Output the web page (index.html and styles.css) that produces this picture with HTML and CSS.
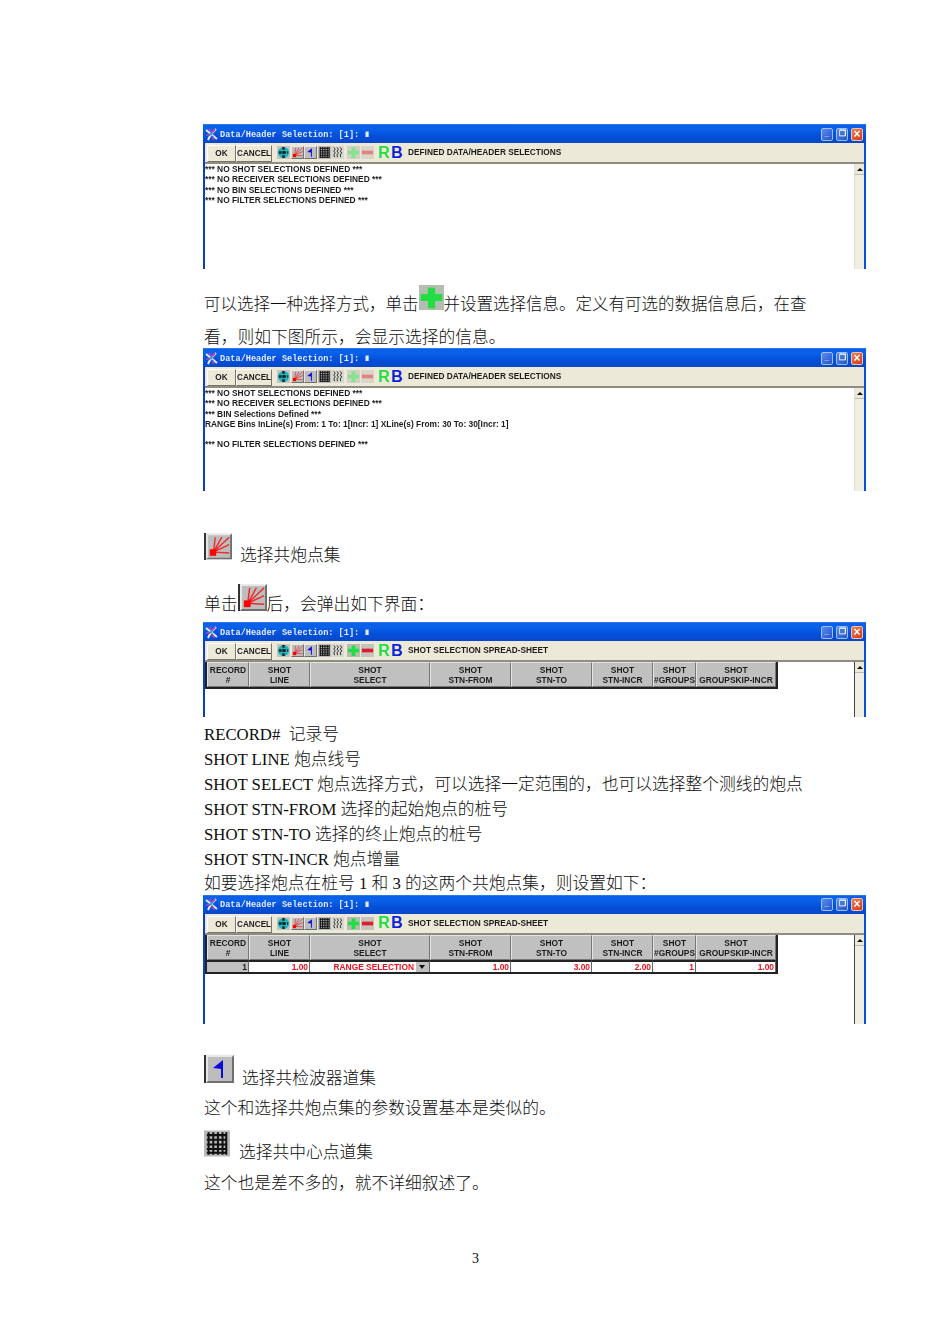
FILE: index.html
```html
<!DOCTYPE html>
<html lang="zh">
<head>
<meta charset="utf-8">
<title>Data/Header Selection</title>
<link rel="stylesheet" href="styles.css">
</head>
<body>
<svg class="defs" aria-hidden="true">
  <symbol id="bevel" viewBox="0 0 28 28"><rect width="28" height="28" fill="#bdbdbd"/><path d="M0 28V0h28l-2 2H2v24z" fill="#e8e8e8"/><path d="M28 0v28H0l2-2h24V2z" fill="#6f6f6f"/></symbol>
  <symbol id="i-app" viewBox="0 0 13 13"><path d="M1 2l5 4-3 6M11 1L6 6l6 5" stroke="#e8e8ff" stroke-width="2" fill="none"/><path d="M4 1l3 3 3-3M1 7l4 0M7 8l2 4" stroke="#8a4ac8" stroke-width="2" fill="none"/><circle cx="6" cy="6" r="1.5" fill="#30a0d0"/></symbol>
  <symbol id="i-globe" viewBox="0 0 28 28"><rect width="28" height="28" fill="#c4c4bc"/><circle cx="14" cy="14" r="12" fill="#22b5b5"/><path d="M14 2v24M4 14h20" stroke="#123" stroke-width="5" stroke-dasharray="6 3"/></symbol>
  <symbol id="i-shot" viewBox="0 0 28 28"><use href="#bevel"/><path d="M8 20L10 4M8 20L17 4M8 20L25 4M8 20L25 12M8 20L25 21" stroke="#ee2a2a" stroke-width="1.5" fill="none"/><rect x="4" y="17" width="7" height="7" fill="#f00"/></symbol>
  <symbol id="i-flag" viewBox="0 0 28 28"><use href="#bevel"/><path d="M17 5v18h-2v-9l-8-1z" fill="#0a0ae0"/></symbol>
  <symbol id="i-grid" viewBox="0 0 28 28"><rect width="28" height="28" fill="#b9b9b9"/><path d="M3 5h22M3 10h22M3 15h22M3 20h22M3 24h22M5 2v24M10 2v24M15 2v24M20 2v24M24 2v24" stroke="#111" stroke-width="2.2"/></symbol>
  <symbol id="i-gather" viewBox="0 0 28 28"><rect width="28" height="28" fill="#d8d8d0"/><path d="M6 3l3 4-3 4 3 4-3 4 2 5M13 3l3 4-3 4 3 4-3 4 1 5M20 3l3 4-3 4 3 4-3 4 1 5" stroke="#222" stroke-width="2" fill="none"/></symbol>
  <symbol id="i-plus" viewBox="0 0 28 28"><rect width="28" height="28" fill="#b5bcb0"/><path d="M10 3h8v7h8v8h-8v8h-8v-8H2v-8h8z" fill="#22dd44"/></symbol>
  <symbol id="i-minus" viewBox="0 0 28 28"><rect width="28" height="28" fill="#c4c4bc"/><rect x="2" y="10" width="24" height="8" fill="#e01c2c"/></symbol>
</svg>

<main class="page">

  <section class="win win-tall">
    <header class="title"><svg class="app"><use href="#i-app"/></svg><span class="title-text">Data/Header Selection: [1]: ∎</span><span class="ctrls"><i class="ctrl">_</i><i class="ctrl">❐</i><i class="ctrl close">×</i></span></header>
    <div class="tools dim">
      <button class="btn ok">OK</button><button class="btn cancel">CANCEL</button>
      <span class="icons"><svg class="ti"><use href="#i-globe"/></svg><svg class="ti"><use href="#i-shot"/></svg><svg class="ti"><use href="#i-flag"/></svg><svg class="ti"><use href="#i-grid"/></svg><svg class="ti"><use href="#i-gather"/></svg></span>
      <span class="icons pm"><svg class="ti plus"><use href="#i-plus"/></svg><svg class="ti minus"><use href="#i-minus"/></svg></span>
      <span class="rb"><b class="r">R</b><b class="b">B</b></span>
      <span class="tool-label">DEFINED DATA/HEADER SELECTIONS</span>
    </div>
    <div class="body">
      <div class="log">
        <p>*** NO SHOT SELECTIONS DEFINED ***</p>
        <p>*** NO RECEIVER SELECTIONS DEFINED ***</p>
        <p>*** NO BIN SELECTIONS DEFINED ***</p>
        <p>*** NO FILTER SELECTIONS DEFINED ***</p>
      </div>
      <div class="scroll"><span class="arrow"></span></div>
    </div>
  </section>

  <p class="line l1"><span>可以选择一种选择方式，单击</span><svg class="inline-plus"><use href="#i-plus"/></svg><span>并设置选择信息。定义有可选的数据信息后，在查</span></p>
  <p class="line l2">看，则如下图所示，会显示选择的信息。</p>

  <section class="win win-mid">
    <header class="title"><svg class="app"><use href="#i-app"/></svg><span class="title-text">Data/Header Selection: [1]: ∎</span><span class="ctrls"><i class="ctrl">_</i><i class="ctrl">❐</i><i class="ctrl close">×</i></span></header>
    <div class="tools dim">
      <button class="btn ok">OK</button><button class="btn cancel">CANCEL</button>
      <span class="icons"><svg class="ti"><use href="#i-globe"/></svg><svg class="ti"><use href="#i-shot"/></svg><svg class="ti"><use href="#i-flag"/></svg><svg class="ti"><use href="#i-grid"/></svg><svg class="ti"><use href="#i-gather"/></svg></span>
      <span class="icons pm"><svg class="ti plus"><use href="#i-plus"/></svg><svg class="ti minus"><use href="#i-minus"/></svg></span>
      <span class="rb"><b class="r">R</b><b class="b">B</b></span>
      <span class="tool-label">DEFINED DATA/HEADER SELECTIONS</span>
    </div>
    <div class="body">
      <div class="log">
        <p>*** NO SHOT SELECTIONS DEFINED ***</p>
        <p>*** NO RECEIVER SELECTIONS DEFINED ***</p>
        <p>*** BIN Selections Defined ***</p>
        <p>RANGE Bins InLine(s) From: 1 To: 1[Incr: 1] XLine(s) From: 30 To: 30[Incr: 1]</p>
        <p>&nbsp;</p>
        <p>*** NO FILTER SELECTIONS DEFINED ***</p>
      </div>
      <div class="scroll"><span class="arrow"></span></div>
    </div>
  </section>

  <p class="line l3"><svg class="big shot1"><use href="#i-shot"/></svg><span class="after-shot">选择共炮点集</span></p>
  <p class="line l4"><span>单击</span><svg class="big shot2"><use href="#i-shot"/></svg><span>后，会弹出如下界面：</span></p>

  <section class="win win-short">
    <header class="title"><svg class="app"><use href="#i-app"/></svg><span class="title-text">Data/Header Selection: [1]: ∎</span><span class="ctrls"><i class="ctrl">_</i><i class="ctrl">❐</i><i class="ctrl close">×</i></span></header>
    <div class="tools">
      <button class="btn ok">OK</button><button class="btn cancel">CANCEL</button>
      <span class="icons"><svg class="ti"><use href="#i-globe"/></svg><svg class="ti"><use href="#i-shot"/></svg><svg class="ti"><use href="#i-flag"/></svg><svg class="ti"><use href="#i-grid"/></svg><svg class="ti"><use href="#i-gather"/></svg></span>
      <span class="icons pm"><svg class="ti plus"><use href="#i-plus"/></svg><svg class="ti minus"><use href="#i-minus"/></svg></span>
      <span class="rb"><b class="r">R</b><b class="b">B</b></span>
      <span class="tool-label">SHOT SELECTION SPREAD-SHEET</span>
    </div>
    <div class="body">
      <div class="sheet">
        <div class="th">RECORD<br>#</div><div class="th">SHOT<br>LINE</div><div class="th">SHOT<br>SELECT</div><div class="th">SHOT<br>STN-FROM</div><div class="th">SHOT<br>STN-TO</div><div class="th">SHOT<br>STN-INCR</div><div class="th">SHOT<br>#GROUPS</div><div class="th">SHOT<br>GROUPSKIP-INCR</div>
      </div>
      <div class="scroll sheet-scroll"><span class="arrow"></span></div>
    </div>
  </section>

  <div class="notes">
    <p class="line note">RECORD#&nbsp; 记录号</p>
    <p class="line note">SHOT LINE 炮点线号</p>
    <p class="line note">SHOT SELECT 炮点选择方式，可以选择一定范围的，也可以选择整个测线的炮点</p>
    <p class="line note">SHOT STN-FROM 选择的起始炮点的桩号</p>
    <p class="line note">SHOT STN-TO 选择的终止炮点的桩号</p>
    <p class="line note">SHOT STN-INCR 炮点增量</p>
    <p class="line note">如要选择炮点在桩号 1 和 3 的这两个共炮点集，则设置如下：</p>
  </div>

  <section class="win win-table">
    <header class="title"><svg class="app"><use href="#i-app"/></svg><span class="title-text">Data/Header Selection: [1]: ∎</span><span class="ctrls"><i class="ctrl">_</i><i class="ctrl">❐</i><i class="ctrl close">×</i></span></header>
    <div class="tools">
      <button class="btn ok">OK</button><button class="btn cancel">CANCEL</button>
      <span class="icons"><svg class="ti"><use href="#i-globe"/></svg><svg class="ti"><use href="#i-shot"/></svg><svg class="ti"><use href="#i-flag"/></svg><svg class="ti"><use href="#i-grid"/></svg><svg class="ti"><use href="#i-gather"/></svg></span>
      <span class="icons pm"><svg class="ti plus"><use href="#i-plus"/></svg><svg class="ti minus"><use href="#i-minus"/></svg></span>
      <span class="rb"><b class="r">R</b><b class="b">B</b></span>
      <span class="tool-label">SHOT SELECTION SPREAD-SHEET</span>
    </div>
    <div class="body">
      <div class="sheet">
        <div class="th">RECORD<br>#</div><div class="th">SHOT<br>LINE</div><div class="th">SHOT<br>SELECT</div><div class="th">SHOT<br>STN-FROM</div><div class="th">SHOT<br>STN-TO</div><div class="th">SHOT<br>STN-INCR</div><div class="th">SHOT<br>#GROUPS</div><div class="th">SHOT<br>GROUPSKIP-INCR</div>
        <div class="td rec">1</div><div class="td">1.00</div><div class="td sel"><span>RANGE SELECTION</span><span class="drop"></span></div><div class="td">1.00</div><div class="td">3.00</div><div class="td">2.00</div><div class="td">1</div><div class="td">1.00</div>
      </div>
      <div class="scroll sheet-scroll"><span class="arrow"></span></div>
    </div>
  </section>

  <p class="line l5"><svg class="big flag"><use href="#i-flag"/></svg><span class="after-flag">选择共检波器道集</span></p>
  <p class="line l6">这个和选择共炮点集的参数设置基本是类似的。</p>
  <p class="line l7"><svg class="big gridicon"><use href="#i-grid"/></svg><span class="after-grid">选择共中心点道集</span></p>
  <p class="line l8">这个也是差不多的，就不详细叙述了。</p>
  <p class="line pageno">3</p>
</main>
</body>
</html>
```

FILE: styles.css
```css
* { box-sizing: border-box; }
html, body { margin: 0; padding: 0; background: #fff; }
body { width: 950px; height: 1344px; overflow: hidden; }
.defs { position: absolute; width: 0; height: 0; }

.page {
  padding: 124px 84px 0 203px;
  font-family: "Liberation Serif", "Noto Sans CJK SC", serif;
  font-size: 16.75px;
  font-weight: 300;
  color: #0c0c0c;
}

/* text lines */
.line {
  margin: 0;
  height: 24px;
  padding: 3px 0 0 1px;
  display: flex;
  align-items: center;
  white-space: pre;
  line-height: 21px;
}
.l1 { margin-top: 22px; font-size: 16.5px; }
.l2 { margin-top: 9px; }
.l3 { margin-top: 51px; }
.l4 { margin-top: 25px; }
.l5 { margin-top: 41px; }
.l6 { margin-top: 6px; }
.l7 { margin-top: 20px; }
.l8 { margin-top: 7px; }
.win-short { margin-top: 7px; }
.notes { padding-top: 4px; }
.note { height: 24.85px; }
.pageno {
  margin-top: 51px;
  justify-content: center;
  font-size: 14px;
  padding: 3px 0 0;
  margin-left: -118px;
}

/* inline picture icons */
.big, .inline-plus { flex: none; display: block; }
.inline-plus { width: 25px; height: 25px; margin-bottom: 15px; }
.big { border-left: 2px solid #333; }
.shot1 { width: 28px; height: 27px; margin-bottom: 18px; }
.shot2 { width: 29px; height: 27px; margin-bottom: 14px; }
.flag { width: 30px; height: 28px; margin-bottom: 19px; }
.gridicon { width: 26px; height: 27px; margin-bottom: 18px; border-left: 0; }
.after-shot { margin-left: 8px; }
.after-flag { margin-left: 8px; }
.after-grid { margin-left: 9px; }

/* window */
.win {
  width: 663px;
  display: flex;
  flex-direction: column;
  border-left: 2px solid #0a3fc0;
  border-right: 2px solid #0a4fd8;
  filter: blur(0.35px);
  font-family: "Liberation Sans", Arial, sans-serif;
  font-weight: bold;
  color: #1c1c1c;
}
.win-tall { height: 145px; }
.win-mid { height: 143px; }
.win-short { height: 95px; }
.win-table { height: 129px; }

.title {
  height: 19px;
  flex: none;
  margin: 0 -2px;
  padding: 0 3px 0 2px;
  display: flex;
  align-items: center;
  background: linear-gradient(#0a5fe6 0, #0a62ea 20%, #0550da 60%, #0748c8 100%);
  border-top: 1px solid #2a78ee;
}
.app { width: 13px; height: 13px; flex: none; }
.title-text {
  margin-left: 2px;
  font-family: "Liberation Mono", monospace;
  font-size: 8.6px;
  color: #e6ecff;
  white-space: pre;
}
.ctrls { margin-left: auto; display: flex; gap: 3px; }
.ctrl {
  width: 12px;
  height: 13px;
  border: 1px solid #9fc0f8;
  border-radius: 2px;
  background: linear-gradient(135deg, #5a8cec, #2454cc);
  color: #fff;
  font-style: normal;
  font-size: 8px;
  line-height: 10px;
  text-align: center;
  overflow: hidden;
}
.close { background: linear-gradient(135deg, #ec8058, #d43a14); border-color: #f0c0a8; font-size: 12px; }

/* toolbar */
.tools {
  height: 21px;
  flex: none;
  display: flex;
  align-items: center;
  background: #ece9d8;
  border-bottom: 2px solid #8f8d80;
  padding-left: 2px;
}
.btn {
  height: 17px;
  margin: 2px 0 0;
  padding: 0;
  border: 1px solid;
  border-color: #fff #77756a #77756a #fff;
  background: #ece9d8;
  font: bold 8.2px "Liberation Sans", Arial, sans-serif;
  color: #1c1c1c;
}
.ok { width: 29px; }
.cancel { width: 36px; }
.icons { display: flex; gap: 0.5px; margin-left: 5px; }
.ti { width: 13px; height: 13px; display: block; }
.pm { margin-left: 3px; gap: 1px; }
.dim .plus, .dim .minus { opacity: 0.5; }
.rb { display: flex; margin-left: 4px; gap: 1px; font-size: 16px; line-height: 14px; }
.rb b { width: 12px; text-align: center; }
.r { color: #22dd44; }
.b { color: #1020d8; }
.tool-label { margin-left: 5px; margin-top: -1px; font-size: 8.3px; white-space: pre; }

/* body */
.body { flex: 1; min-height: 0; display: flex; background: #fff; overflow: hidden; }
.log { flex: 1; font-size: 8.38px; line-height: 10.3px; }
.log p { margin: 0; white-space: pre; }
.scroll {
  width: 10px;
  flex: none;
  margin-left: auto;
  background: #f1efe4;
  border-left: 1px solid #e2e0d2;
}
.sheet-scroll { border-left-color: #444; }
.arrow {
  display: block;
  height: 11px;
  background: #ece9d8;
  border-bottom: 1px solid #bbb;
  position: relative;
}
.arrow::after {
  content: "";
  position: absolute;
  left: 2px;
  top: 4px;
  border: 3px solid transparent;
  border-top: 0;
  border-bottom: 3px solid #111;
}

/* spreadsheet */
.sheet {
  display: grid;
  grid-template-columns: 42px 61px 120px 81px 81px 61px 43px 80px;
  grid-auto-rows: min-content;
  align-self: flex-start;
  border: 2px solid #222;
  border-top: 0;
  font-size: 8.4px;
  width: 573px;
}
.th {
  height: 25px;
  background: #c0c0c0;
  border: 1px solid;
  border-color: #e4e4e4 #777 #777 #e4e4e4;
  text-align: center;
  line-height: 10.2px;
  padding-top: 2px;
  white-space: nowrap;
  overflow: hidden;
}
.td {
  height: 12px;
  background: #fff;
  border-top: 2px solid #222;
  border-right: 1px solid #666;
  color: #e8121c;
  text-align: right;
  line-height: 10px;
  padding-right: 1px;
}
.rec { background: #c0c0c0; color: #1c1c1c; }
.sel { display: flex; justify-content: flex-end; align-items: center; gap: 2px; padding-right: 0; }
.drop {
  width: 13px;
  height: 10px;
  background: #c0c0c0;
  position: relative;
}
.drop::after {
  content: "";
  position: absolute;
  left: 3px;
  top: 3px;
  border: 3.5px solid transparent;
  border-bottom: 0;
  border-top: 4px solid #111;
}
```
